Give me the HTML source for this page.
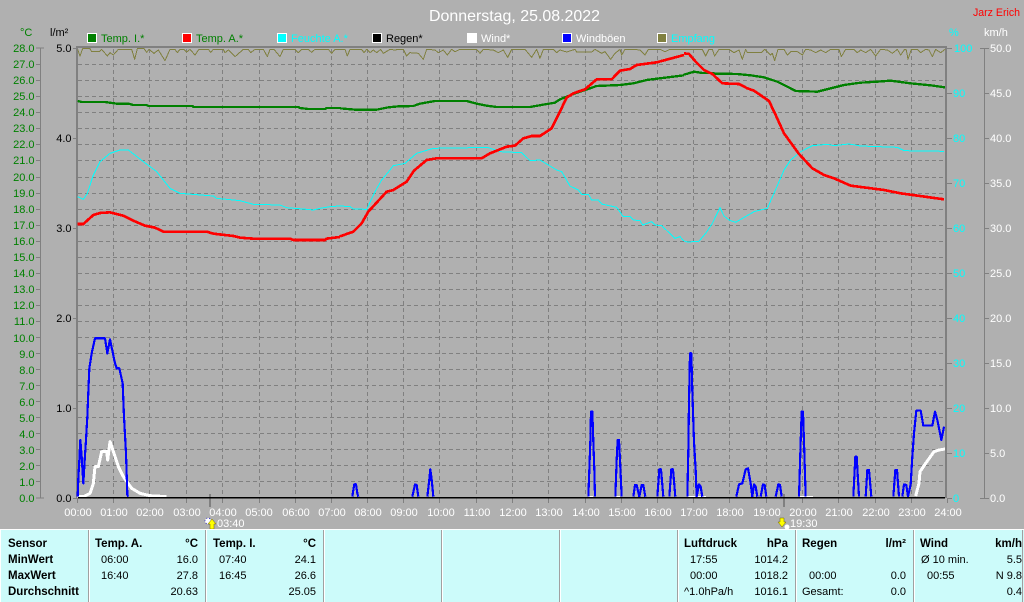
<!DOCTYPE html>
<html><head><meta charset="utf-8"><title>Donnerstag, 25.08.2022</title>
<style>
html,body{margin:0;padding:0;width:1024px;height:602px;overflow:hidden;background:#b0b0b0}
svg{display:block;font-family:"Liberation Sans",sans-serif;font-size:11px}
.l{fill:#008000;text-anchor:end}.k{fill:#000;text-anchor:end}.c{fill:#0ff}.w{fill:#fff}
.h{fill:#fff;text-anchor:middle}
.e{text-anchor:end}.b{font-weight:bold;font-size:11.5px}
.line{fill:none;stroke-linejoin:round;stroke-linecap:butt;shape-rendering:crispEdges}
</style></head><body>
<svg width="1024" height="602" viewBox="0 0 1024 602" xmlns="http://www.w3.org/2000/svg">
<rect width="1024" height="602" fill="#b0b0b0"/>
<text x="429" y="21" font-size="16" fill="#fff" textLength="171" lengthAdjust="spacingAndGlyphs">Donnerstag, 25.08.2022</text>
<text x="973" y="16" fill="#f00" textLength="47" lengthAdjust="spacingAndGlyphs">Jarz Erich</text>
<!-- legend -->
<g stroke="#fff" stroke-width="1" shape-rendering="crispEdges">
<rect x="87.5" y="33.5" width="9" height="9" fill="#008000"/>
<rect x="182.5" y="33.5" width="9" height="9" fill="#f00"/>
<rect x="277.5" y="33.5" width="9" height="9" fill="#0ff"/>
<rect x="372.5" y="33.5" width="9" height="9" fill="#000"/>
<rect x="467.5" y="33.5" width="9" height="9" fill="#fff"/>
<rect x="562.5" y="33.5" width="9" height="9" fill="#00f"/>
<rect x="657.5" y="33.5" width="9" height="9" fill="#808040"/>
</g>
<text x="101" y="42" fill="#008000">Temp. I.*</text>
<text x="196" y="42" fill="#008000">Temp. A.*</text>
<text x="291" y="42" fill="#0ff">Feuchte A.*</text>
<text x="386" y="42" fill="#000">Regen*</text>
<text x="481" y="42" fill="#fff">Wind*</text>
<text x="576" y="42" fill="#fff">Windböen</text>
<text x="671" y="42" fill="#0ff">Empfang</text>
<text x="20" y="36" fill="#008000">°C</text>
<text x="50" y="36" fill="#000">l/m²</text>
<text x="949" y="36" fill="#0ff">%</text>
<text x="984" y="36" fill="#fff">km/h</text>
<!-- grid -->
<path d="M78 64.5H945M78 80.5H945M78 96.5H945M78 112.5H945M78 128.5H945M78 144.5H945M78 160.5H945M78 177.5H945M78 193.5H945M78 209.5H945M78 225.5H945M78 241.5H945M78 257.5H945M78 273.5H945M78 289.5H945M78 305.5H945M78 321.5H945M78 337.5H945M78 353.5H945M78 369.5H945M78 385.5H945M78 401.5H945M78 417.5H945M78 433.5H945M78 449.5H945M78 465.5H945M78 481.5H945" stroke="#808080" stroke-dasharray="4 3" fill="none" shape-rendering="crispEdges"/>
<path d="M113.5 49V497M149.5 49V497M186.5 49V497M222.5 49V497M259.5 49V497M295.5 49V497M331.5 49V497M367.5 49V497M403.5 49V497M439.5 49V497M476.5 49V497M512.5 49V497M548.5 49V497M585.5 49V497M621.5 49V497M657.5 49V497M693.5 49V497M729.5 49V497M766.5 49V497M802.5 49V497M838.5 49V497M875.5 49V497M911.5 49V497" stroke="#808080" stroke-dasharray="4 3" fill="none" shape-rendering="crispEdges"/>
<!-- frame -->
<path d="M76 47H947" stroke="#808080" stroke-width="2" shape-rendering="crispEdges"/>
<path d="M77 47V498" stroke="#808080" stroke-width="2" shape-rendering="crispEdges"/>
<path d="M946 47V498" stroke="#808080" stroke-width="2" shape-rendering="crispEdges"/>
<!-- axes -->
<path d="M40.5 48V498M44 48H36M44 498H36M40 64.5H36M40 80.5H36M40 96.5H36M40 112.5H36M40 128.5H36M40 144.5H36M40 160.5H36M40 177.5H36M40 193.5H36M40 209.5H36M40 225.5H36M40 241.5H36M40 257.5H36M40 273.5H36M40 289.5H36M40 305.5H36M40 321.5H36M40 337.5H36M40 353.5H36M40 369.5H36M40 385.5H36M40 401.5H36M40 417.5H36M40 433.5H36M40 449.5H36M40 465.5H36M40 481.5H36" stroke="#808080" fill="none" shape-rendering="crispEdges"/>
<path d="M73 48.5H77M73 138.5H77M73 228.5H77M73 318.5H77M73 408.5H77M73 498.5H77" stroke="#808080" shape-rendering="crispEdges"/>
<path d="M947 48.5H952M947 93.5H952M947 138.5H952M947 183.5H952M947 228.5H952M947 273.5H952M947 318.5H952M947 363.5H952M947 408.5H952M947 453.5H952M947 498.5H952" stroke="#808080" shape-rendering="crispEdges"/>
<path d="M984.5 48V498M980 48.5H989M980 498.5H989M985 93.5H989M985 138.5H989M985 183.5H989M985 228.5H989M985 273.5H989M985 318.5H989M985 363.5H989M985 408.5H989M985 453.5H989" stroke="#808080" fill="none" shape-rendering="crispEdges"/>
<path d="M77.5 498V503M113.5 498V503M149.5 498V503M186.5 498V503M222.5 498V503M259.5 498V503M295.5 498V503M331.5 498V503M367.5 498V503M403.5 498V503M439.5 498V503M476.5 498V503M512.5 498V503M548.5 498V503M585.5 498V503M621.5 498V503M657.5 498V503M693.5 498V503M729.5 498V503M766.5 498V503M802.5 498V503M838.5 498V503M875.5 498V503M911.5 498V503M947.5 498V503" stroke="#808080" shape-rendering="crispEdges"/>
<path d="M210 494V507M784 494V507" stroke="#808080" stroke-width="2" shape-rendering="crispEdges"/>
<!-- left labels -->
<g class="l">
<text x="34.5" y="52">28.0</text><text x="34.5" y="68">27.0</text><text x="34.5" y="84">26.0</text><text x="34.5" y="100">25.0</text><text x="34.5" y="116">24.0</text><text x="34.5" y="132">23.0</text><text x="34.5" y="148">22.0</text><text x="34.5" y="164">21.0</text><text x="34.5" y="181">20.0</text><text x="34.5" y="197">19.0</text><text x="34.5" y="213">18.0</text><text x="34.5" y="229">17.0</text><text x="34.5" y="245">16.0</text><text x="34.5" y="261">15.0</text><text x="34.5" y="277">14.0</text><text x="34.5" y="293">13.0</text><text x="34.5" y="309">12.0</text><text x="34.5" y="325">11.0</text><text x="34.5" y="342">10.0</text><text x="34.5" y="358">9.0</text><text x="34.5" y="374">8.0</text><text x="34.5" y="390">7.0</text><text x="34.5" y="406">6.0</text><text x="34.5" y="422">5.0</text><text x="34.5" y="438">4.0</text><text x="34.5" y="454">3.0</text><text x="34.5" y="470">2.0</text><text x="34.5" y="486">1.0</text><text x="34.5" y="502">0.0</text>
</g>
<g class="k">
<text x="71.5" y="52">5.0</text><text x="71.5" y="142">4.0</text><text x="71.5" y="232">3.0</text><text x="71.5" y="322">2.0</text><text x="71.5" y="412">1.0</text><text x="71.5" y="502">0.0</text>
</g>
<g class="c">
<text x="954" y="52">100</text><text x="953" y="97">90</text><text x="953" y="142">80</text><text x="953" y="187">70</text><text x="953" y="232">60</text><text x="953" y="277">50</text><text x="953" y="322">40</text><text x="953" y="367">30</text><text x="953" y="412">20</text><text x="953" y="457">10</text><text x="953" y="502">0</text>
</g>
<g class="w">
<text x="990" y="52">50.0</text><text x="990" y="97">45.0</text><text x="990" y="142">40.0</text><text x="990" y="187">35.0</text><text x="990" y="232">30.0</text><text x="990" y="277">25.0</text><text x="990" y="322">20.0</text><text x="990" y="367">15.0</text><text x="990" y="412">10.0</text><text x="990" y="457">5.0</text><text x="990" y="502">0.0</text>
</g>
<g class="h">
<text x="78" y="516">00:00</text><text x="114" y="516">01:00</text><text x="150" y="516">02:00</text><text x="187" y="516">03:00</text><text x="223" y="516">04:00</text><text x="259" y="516">05:00</text><text x="296" y="516">06:00</text><text x="332" y="516">07:00</text><text x="368" y="516">08:00</text><text x="404" y="516">09:00</text><text x="441" y="516">10:00</text><text x="477" y="516">11:00</text><text x="513" y="516">12:00</text><text x="549" y="516">13:00</text><text x="586" y="516">14:00</text><text x="622" y="516">15:00</text><text x="658" y="516">16:00</text><text x="694" y="516">17:00</text><text x="730" y="516">18:00</text><text x="767" y="516">19:00</text><text x="803" y="516">20:00</text><text x="839" y="516">21:00</text><text x="876" y="516">22:00</text><text x="912" y="516">23:00</text><text x="948" y="516">24:00</text>
</g>
<!-- olive -->
<g stroke="#808040" stroke-width="3" class="line">
<polyline transform="scale(.33333)" points="233,148 240,168 248,146 270,146 275,155 298,155 305,148 322,168 330,158 340,165 355,148 395,148 404,178 412,146 432,146 440,157 447,148 462,160 475,150 495,182 510,148 525,148 532,158 540,148 552,148 560,156 570,148 585,165 597,148 625,148 632,157 640,148 670,148 675,158 685,150 705,170 722,155 730,148 745,148 752,158 765,148 790,148 802,170 810,148 822,148 840,170 850,148 885,148 895,158 905,148 925,148 935,157 945,148 985,148 995,160 1005,148 1020,148"/>
<polyline transform="translate(340,0) scale(.33333)" points="0,148 15,148 22,168 30,148 65,148 72,158 80,148 90,158 100,150 110,158 122,148 130,160 150,148 165,150 175,148 190,148 200,168 210,158 235,160 250,178 260,148 285,150 295,158 310,150 322,165 335,148 345,155 360,148 410,148 420,160 430,148 460,150 475,158 490,150 503,172 515,148 555,148 575,172 590,148 600,175 610,148 640,148 650,158 660,150 680,156 705,148 710,156 755,156 765,148 785,160 795,155 812,178 825,160 840,148 845,165 855,148 880,148 900,150 915,165 925,148 960,148 975,155 990,148 1032,148"/>
<polyline transform="translate(684,0) scale(.33333)" points="0,148 55,148 65,168 75,148 85,148 92,168 105,148 135,148 150,158 165,150 175,178 185,148 190,158 232,158 242,148 260,165 265,160 272,182 282,148 300,148 310,165 320,155 340,155 355,165 365,148 380,150 395,158 410,150 425,158 440,148 465,148 472,170 485,148 510,148 520,158 530,150 545,158 560,148 575,168 590,148 610,150 625,160 640,148 650,165 662,148 667,150 672,178 682,148 700,148 710,158 725,148 735,150 745,170 755,148 770,158 783,148"/>
</g>
<!-- humidity -->
<g stroke="#0ff" stroke-width="3" class="line">
<polyline transform="scale(.33333)" points="233,590 250,598 262,580 280,525 300,485 330,460 360,450 385,450 430,485 470,515 510,565 540,580"/>
<polyline transform="translate(0,170) scale(.33333)" points="540,70 640,78 650,85 720,92 760,103 840,105 860,113 920,118 940,120 960,115 990,110 1020,108"/>
<polyline transform="translate(340,170) scale(.33333)" points="0,108 30,110 40,117 80,118 105,65 125,30 150,0"/>
<polyline transform="translate(340,0) scale(.33333)" points="150,510 160,497 195,490 230,460 280,445 400,443 445,443 480,455 545,458 570,482 600,480 650,510"/>
<polyline transform="translate(340,170) scale(.33333)" points="650,0 665,5 690,48 715,60 725,73 745,73 755,90 775,90 785,102 830,112 850,140 870,140 880,150 900,152 908,165 935,155 945,165 965,167 1005,205 1020,200 1032,213"/>
<polyline transform="translate(684,170) scale(.33333)" points="0,213 10,216 45,214 65,190 85,160 108,113 120,138 135,150 155,157 210,125 250,115 270,70 300,0"/>
<polyline transform="translate(684,0) scale(.33333)" points="300,510 320,480 350,455 385,437 430,433 450,437 495,432 530,438 640,442 660,452 780,454"/>
</g>
<!-- temp I -->
<g stroke="#008000" stroke-width="7" class="line">
<polyline transform="scale(.33333)" points="233,303 245,306 315,306 350,311 385,311 400,315 440,315 445,318 578,318 580,321 895,321 900,324 925,327 975,327 980,324 1020,324"/>
<polyline transform="translate(340,0) scale(.33333)" points="0,325 45,329 110,329 130,325 145,322 175,319 220,318 240,311 285,303 380,303 410,311 440,317 470,321 570,321 615,313 645,308 660,298 700,282 730,272 770,258 840,255 880,250 920,240 1032,226"/>
<polyline transform="translate(684,0) scale(.33333)" points="0,224 30,215 55,219 85,219 95,221 160,222 200,226 240,232 280,245 310,260 335,273 400,275 440,265 480,255 530,248 580,245 620,242 680,250 740,256 783,262"/>
</g>
<!-- temp A -->
<g stroke="#f00" stroke-width="8" class="line">
<polyline transform="translate(0,170) scale(.33333)" points="233,162 250,162 280,135 300,129 330,127 370,137 400,152 435,167 465,173 490,185 620,185 640,191 700,198 720,203 760,206 870,206 880,210 975,210 980,206 1020,201"/>
<polyline transform="translate(340,170) scale(.33333)" points="0,199 40,185 65,160 85,125 140,65 160,60 200,35 222,2"/>
<polyline transform="translate(340,0) scale(.33333)" points="222,512 260,480 290,475 425,475 450,460 500,440 525,437 550,415 575,408 600,408 635,385 650,355 680,293 700,280 735,268 770,238 815,238 840,212 870,207 890,195 950,187 1032,165"/>
<polyline transform="translate(684,0) scale(.33333)" points="0,160 15,162 35,185 60,210 85,222 115,250 165,252 190,265 210,272 255,303 275,345 300,400 345,462 385,505 420,525 450,535 500,557 600,570 650,580 780,598"/>
</g>
<!-- wind white -->
<g stroke="#fff" stroke-width="9" class="line">
<polyline transform="translate(0,320) scale(.33333)" points="233,530 250,530 270,520 280,490 285,440 295,440 305,395 320,395 323,420 330,365 345,410 355,440 370,470 395,505 420,520 450,527 500,530"/>
<polyline transform="translate(684,320) scale(.33333)" points="695,528 705,490 708,455 725,430 750,395 765,390 783,387"/>
</g>
<g stroke="#fff" stroke-width="1" shape-rendering="crispEdges">
<path d="M588 496.5H593M616 496.5H620M688 496.5H706M800 496.5H813"/>
</g>
<!-- gusts -->
<g stroke="#00f" stroke-width="6.5" class="line">
<polyline transform="translate(0,320) scale(.33333)" points="233,530 235,475 238,420 241,360 245,410 250,490 255,405 258,360 262,290 265,215 268,145 275,100 285,55 315,55 322,100 330,58 345,130 350,145 358,145 368,190 372,290 378,400 382,525 385,530"/>
<g transform="translate(340,320) scale(.33333)">
<polyline points="37,530 40,510 43,493 48,493 52,520 55,530"/>
<polyline points="217,530 225,493 230,495 235,530"/>
<polyline points="262,530 268,478 271,448 275,478 280,530"/>
<polyline points="745,530 748,450 751,365 753,275 757,275 760,365 763,450 765,530"/>
<polyline points="826,530 830,420 833,360 837,360 840,420 845,530"/>
<polyline points="880,530 885,495 890,495 898,530 905,495 910,495 916,530"/>
<polyline points="952,530 958,448 963,448 970,530"/>
<polyline points="988,530 994,448 999,448 1006,530"/>
</g>
<g transform="translate(684,320) scale(.33333)">
<polyline points="10,530 13,390 15,245 18,100 22,100 25,215 30,365 35,450 38,530 45,493 50,500 55,530"/>
<polyline points="157,530 165,493 175,490 185,448 192,445 200,490 205,530 210,493 215,500 220,530"/>
<polyline points="230,530 237,493 242,495 247,530"/>
<polyline points="275,530 283,493 288,495 293,530"/>
<polyline points="345,530 350,365 353,275 357,275 360,365 365,530"/>
<polyline points="508,530 514,410 518,410 525,530"/>
<polyline points="545,530 550,450 555,450 562,530"/>
<polyline points="628,530 634,450 639,450 645,530"/>
<polyline points="655,530 660,493 667,495 672,530 680,493 685,410 690,340 697,272 710,272 718,317 745,317 753,275 760,300 772,360 780,320"/>
</g>
</g>
<path d="M78 497.5H945" stroke="#000" stroke-width="1.5" shape-rendering="crispEdges"/>
<!-- sunrise / sunset -->
<circle cx="208" cy="521" r="3" fill="#fff" stroke="#3030c0" stroke-width="1" stroke-dasharray="1 2"/>
<path d="M212 519L216 524H214V529H210V524H208Z" fill="#ff0" stroke="#706000" stroke-width=".5"/>
<text x="217" y="527" fill="#fff">03:40</text>
<path d="M782 527L778 522H780V518H784V522H786Z" fill="#ff0" stroke="#706000" stroke-width=".5"/>
<circle cx="787" cy="527" r="2.5" fill="#fff"/>
<text x="790" y="527" fill="#fff">19:30</text>
<!-- table -->
<rect x="0" y="529" width="1024" height="73" fill="#ccfbfa"/>
<path d="M0 529.5H1024M0.5 529V602" stroke="#fff" shape-rendering="crispEdges"/>
<path d="M88.5 530V602M205.5 530V602M323.5 530V602M441.5 530V602M559.5 530V602M677.5 530V602M795.5 530V602M913.5 530V602M1022.5 530V602" stroke="#a0a0a0" shape-rendering="crispEdges"/>
<path d="M89.5 530V602M206.5 530V602M324.5 530V602M442.5 530V602M560.5 530V602M678.5 530V602M796.5 530V602M914.5 530V602" stroke="#fff" shape-rendering="crispEdges"/>
<g fill="#000">
<g class="b"><text x="8" y="547">Sensor</text><text x="8" y="563">MinWert</text><text x="8" y="579">MaxWert</text><text x="8" y="595">Durchschnitt</text>
<text x="95" y="547">Temp. A.</text><text x="198" y="547" class="e">°C</text>
<text x="213" y="547">Temp. I.</text><text x="316" y="547" class="e">°C</text>
<text x="684" y="547">Luftdruck</text><text x="788" y="547" class="e">hPa</text>
<text x="802" y="547">Regen</text><text x="906" y="547" class="e">l/m²</text>
<text x="920" y="547">Wind</text><text x="1022" y="547" class="e">km/h</text></g>
<text x="101" y="563">06:00</text><text x="198" y="563" class="e">16.0</text>
<text x="101" y="579">16:40</text><text x="198" y="579" class="e">27.8</text>
<text x="198" y="595" class="e">20.63</text>
<text x="219" y="563">07:40</text><text x="316" y="563" class="e">24.1</text>
<text x="219" y="579">16:45</text><text x="316" y="579" class="e">26.6</text>
<text x="316" y="595" class="e">25.05</text>
<text x="690" y="563">17:55</text><text x="788" y="563" class="e">1014.2</text>
<text x="690" y="579">00:00</text><text x="788" y="579" class="e">1018.2</text>
<text x="684" y="595">^1.0hPa/h</text><text x="788" y="595" class="e">1016.1</text>
<text x="809" y="579">00:00</text><text x="906" y="579" class="e">0.0</text>
<text x="802" y="595">Gesamt:</text><text x="906" y="595" class="e">0.0</text>
<text x="921" y="563">Ø 10 min.</text><text x="1022" y="563" class="e">5.5</text>
<text x="927" y="579">00:55</text><text x="1022" y="579" class="e">N 9.8</text>
<text x="1022" y="595" class="e">0.4</text>
</g>
</svg>
</body></html>
